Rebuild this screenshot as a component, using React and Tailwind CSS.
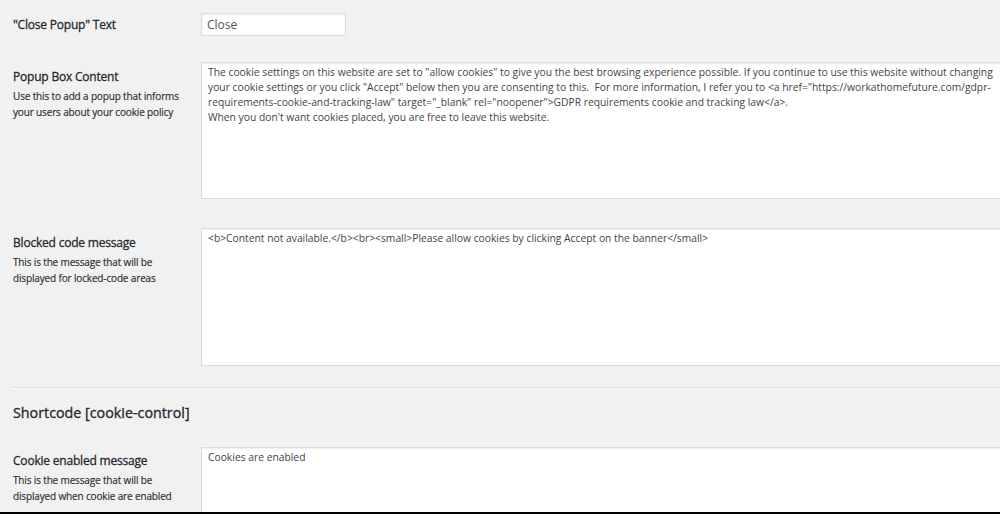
import React from "react";

const ff = "font-['Open_Sans',_'Noto_Sans',_sans-serif]";

function Label({ title, desc }) {
  return (
    <div className="w-[201px] shrink-0 pl-[13px]">
      <div className="text-[12px] text-[#23282d] leading-[16px] tracking-[-0.2px] [-webkit-text-stroke:0.28px_#23282d]">{title}</div>
      {desc && (
        <div className="mt-[3px] text-[10px] text-[#2c2c2c] leading-[16px] tracking-[-0.15px] whitespace-pre [-webkit-text-stroke:0.15px_#2c2c2c]">{desc}</div>
      )}
    </div>
  );
}

function Area({ children, h }) {
  return (
    <div
      className={`w-[830px] shrink-0 bg-white border border-[#dcdcdc] shadow-[inset_0_1px_2px_rgba(0,0,0,0.07)] px-[6px] pt-[2px] text-[10.3px] leading-[15px] text-[#444] whitespace-pre ${h}`}
    >
      {children}
    </div>
  );
}

export default function App() {
  return (
    <div className={`w-[1000px] h-[514px] bg-[#f1f1f1] overflow-hidden border-b-2 border-black ${ff}`}>
      {/* Close popup text */}
      <div className="flex items-center pt-[13px]">
        <div className="w-[201px] shrink-0 pl-[13px] text-[12px] text-[#23282d] tracking-[-0.2px] [-webkit-text-stroke:0.28px_#23282d]">"Close Popup" Text</div>
        <div className="w-[145px] h-[23px] bg-white border border-[#dcdcdc] shadow-[inset_0_1px_2px_rgba(0,0,0,0.07)] px-[5px] flex items-center text-[12px] text-[#555]">
          Close
        </div>
      </div>

      {/* Popup box content */}
      <div className="flex mt-[26px]">
        <div className="pt-[7px]">
          <Label title="Popup Box Content" desc={"Use this to add a popup that informs\nyour users about your cookie policy"} />
        </div>
        <Area h="h-[137px]">
          {`The cookie settings on this website are set to "allow cookies" to give you the best browsing experience possible. If you continue to use this website without changing
your cookie settings or you click "Accept" below then you are consenting to this.  For more information, I refer you to <a href="https://workathomefuture.com/gdpr-
requirements-cookie-and-tracking-law" target="_blank" rel="noopener">GDPR requirements cookie and tracking law</a>.
When you don't want cookies placed, you are free to leave this website.`}
        </Area>
      </div>

      {/* Blocked code message */}
      <div className="flex mt-[29px]">
        <div className="pt-[7px]">
          <Label title="Blocked code message" desc={"This is the message that will be\ndisplayed for locked-code areas"} />
        </div>
        <Area h="h-[138px]">
          {`<b>Content not available.</b><br><small>Please allow cookies by clicking Accept on the banner</small>`}
        </Area>
      </div>

      {/* Separator */}
      <div className="ml-[12px] mt-[21px] border-t border-[#dcdcdc] border-b border-b-[#fafafa]" />

      {/* Shortcode heading */}
      <div className="pl-[13px] mt-[14px] text-[14.3px] text-[#23282d] leading-[20px] [-webkit-text-stroke:0.3px_#23282d]">Shortcode [cookie-control]</div>

      {/* Cookie enabled message */}
      <div className="flex mt-[24px]">
        <div className="pt-[6px]">
          <Label title="Cookie enabled message" desc={"This is the message that will be\ndisplayed when cookie are enabled"} />
        </div>
        <Area h="h-[138px]">Cookies are enabled</Area>
      </div>
    </div>
  );
}
